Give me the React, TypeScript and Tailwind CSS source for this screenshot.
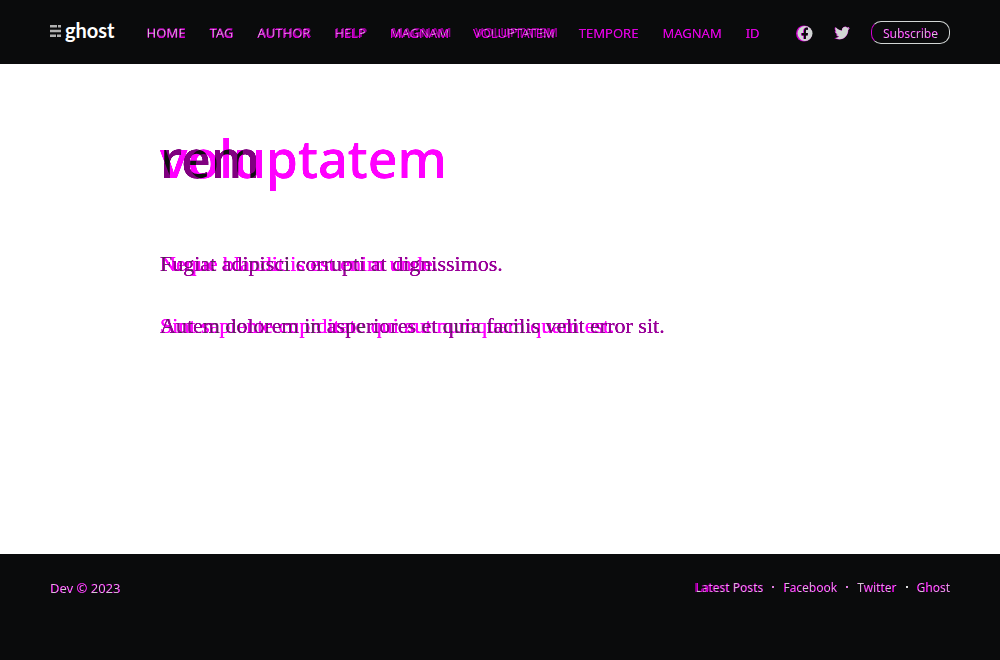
import type { ReactNode } from 'react';

type Tone = 'title' | 'body' | 'bar';

const FILTER: Record<Tone, string> = {
  title: '[filter:url(#tone-title)]',
  body: '[filter:url(#tone-body)]',
  bar: '[filter:url(#tone-bar)]',
};

// Red channel carries the previous text, green the current one; the filter maps them to the shown colours.
const MATRIX: [string, string, number][] = [
  ['tone-title', '-.45 -.95 0 0 1.45  .06 .06 0 0 -.06  -.45 -.95 0 0 1.45  0 0 0 1 0', 1.8],
  ['tone-body', '-.35 -.75 0 0 1.35  .22 .22 0 0 -.22  -.35 -.75 0 0 1.35  0 0 0 1 0', 1.6],
  ['tone-bar', '.25 -.06 0 0 .61  .8 .8 0 0 -.8  .25 -.06 0 0 .61  0 0 0 1 0', 1.3],
];

function Filters() {
  return (
    <svg className="absolute size-0" aria-hidden="true">
      {MATRIX.map(([id, values, slope]) => (
        <filter key={id} id={id} colorInterpolationFilters="sRGB" x="-5%" y="-20%" width="110%" height="140%">
          <feColorMatrix type="matrix" values={values} />
          <feComponentTransfer>
            <feFuncA type="linear" slope={slope} />
          </feComponentTransfer>
        </filter>
      ))}
    </svg>
  );
}

function Compare({ tone, before, after, end = false }: { tone: Tone; before: ReactNode; after: ReactNode; end?: boolean }) {
  return (
    <span className={`grid isolate ${end ? 'justify-items-end' : 'justify-items-start'} ${FILTER[tone]}`}>
      <span className="[grid-area:1/1] text-[#00ff00]">{after}</span>
      <span className="[grid-area:1/1] text-[#ff0000] mix-blend-plus-lighter">{before}</span>
    </span>
  );
}

const NAV_BEFORE = ['Home', 'Tag', 'Author', 'Help', 'Magnam', 'Voluptatem', 'Tempore', 'Magnam', 'Id'];
const NAV_AFTER = ['Home', 'Tag', 'Author', 'Help', 'Magnam', 'Voluptatem'];

function NavItems({ items }: { items: string[] }) {
  return (
    <span className="flex gap-6 uppercase">
      {items.map((t, i) => (
        <a key={i} href="#">{t}</a>
      ))}
    </span>
  );
}

function Logo() {
  return (
    <a href="#" className="mb-1 flex items-center gap-1 text-white">
      <svg width="11" height="12" viewBox="0 0 11 12" fill="#b0b0b0" className="mt-0.5" aria-hidden="true">
        <path d="M0 0h7v2.400H0zM8 0h3v2.400H8zM0 4.800h11v2.400H0zM0 9.600h6v2.400H0zM7 9.600h4v2.400H7z" />
      </svg>
      <span className="font-['Lato',sans-serif] text-[20px] leading-6 font-bold">ghost</span>
    </a>
  );
}

function FacebookIcon() {
  return (
    <svg width="17" height="17" viewBox="0 0 17 17" aria-hidden="true">
      <circle cx="8" cy="8.500" r="8" fill="#d000d0" />
      <circle cx="9" cy="8.500" r="7.500" fill="#d2d6d5" />
      <path d="M7.200 14v-3.600H5V7.900h2.200V6c0-2.200 1.200-3.400 3.200-3.400l1.600.1v2.100h-1c-1 0-1.300.5-1.300 1.300v1.800H12l-.4 2.500H9.700V14z" fill="#d000d0" />
      <path d="M8 14v-3.600H5.800V7.900H8V6c0-2.200 1.200-3.400 2.800-3.400l1.200.1v2.100h-.8c-1 0-1.300.5-1.300 1.300v1.800H12l-.4 2.500h-1.700V14z" fill="#0a0b0c" />
    </svg>
  );
}

const BIRD =
  'M23.95 4.57a10 10 0 0 1-2.82.77 4.96 4.96 0 0 0 2.16-2.72c-.95.55-2 .96-3.12 1.18a4.920 4.920 0 0 0-8.390 4.480C7.690 8.090 4.070 6.130 1.640 3.160a4.820 4.820 0 0 0-.67 2.470c0 1.710.87 3.210 2.190 4.100a4.900 4.900 0 0 1-2.230-.62v.06a4.920 4.920 0 0 0 3.950 4.830 5 5 0 0 1-2.210.08 4.940 4.940 0 0 0 4.600 3.420A9.870 9.870 0 0 1 0 19.540a13.990 13.990 0 0 0 7.560 2.210c9.050 0 13.990-7.500 13.990-13.980 0-.21 0-.42-.02-.63a9.940 9.940 0 0 0 2.460-2.550z';

function TwitterIcon() {
  return (
    <svg width="16" height="16" viewBox="0 0 24 24" aria-hidden="true">
      <path d={BIRD} fill="#d000d0" />
      <path d={BIRD} fill="#d2d6d5" transform="translate(1.200 0.500) scale(.92 .96)" />
    </svg>
  );
}

const LINKS = ['Latest Posts', 'Facebook', 'Twitter', 'Ghost'];
const DOTS = ['bg-[#e080e0]', 'bg-[#e080e0]', 'bg-[#e0e0e0]'];

export default function App() {
  return (
    <div className="flex min-h-screen flex-col bg-white font-['Noto_Sans',sans-serif] text-[13px] leading-5">
      <Filters />
      <header className="flex h-16 items-center bg-[#0a0b0c] px-[50px]">
        <Logo />
        <nav className="mt-0.5 ml-8 grow">
          <Compare
            tone="bar"
            before={<NavItems items={NAV_BEFORE} />}
            after={<span className="leading-[18px] font-medium"><NavItems items={NAV_AFTER} /></span>}
          />
        </nav>
        <div className="flex items-center gap-[21px]">
          <a href="#" aria-label="Facebook" className="mt-0.5"><FacebookIcon /></a>
          <a href="#" aria-label="Twitter" className="mt-0.5"><TwitterIcon /></a>
          <button className="h-[23px] rounded-[10px] border border-[#d2d6d5] border-l-[#d000d0] px-[11px] pt-0.5 text-[12px] leading-5">
            <Compare tone="bar" end before="Subscribe" after={<span className="font-['Open_Sans']">Subscribe</span>} />
          </button>
        </div>
      </header>

      <main className="mx-auto w-full max-w-[680px] grow pt-16">
        <h1 className="text-[52px] leading-[60px] font-medium">
          <Compare tone="title" before="voluptatem" after="rem" />
        </h1>
        <div className="mt-[60px] flex flex-col gap-[30px] font-['Liberation_Serif',serif] text-[22px] leading-8">
          <p>
            <Compare tone="body" before="Neque blanditiis est enim unde." after="Fugiat adipisci corrupti at dignissimos." />
          </p>
          <p>
            <Compare
              tone="body"
              before="Sint sapiente cupiditate qui aut numquam quam est."
              after="Autem dolorem in asperiores et quia facilis velit error sit."
            />
          </p>
        </div>
      </main>

      <footer className="flex items-start justify-between bg-[#0a0b0c] px-[50px] pt-6 pb-[62px]">
        <Compare tone="bar" before="Dev © 2023" after={<span className="font-['Open_Sans']">Dev © 2023</span>} />
        <nav className="flex gap-[9px] text-[12px]">
          {LINKS.map((t, i) => (
            <span key={t} className="flex gap-[9px]">
              <a href="#">
                <Compare tone="bar" end before={t} after={<span className={i === 0 ? 'font-medium' : "font-['Open_Sans']"}>{t}</span>} />
              </a>
              {i < 3 && <span className={`mt-2 size-0.5 ${DOTS[i]}`} />}
            </span>
          ))}
        </nav>
      </footer>
    </div>
  );
}
